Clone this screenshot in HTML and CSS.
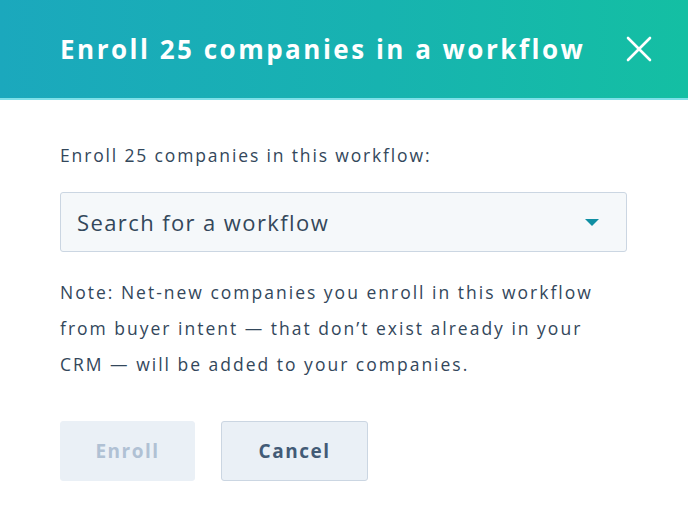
FILE: index.html
```html
<!DOCTYPE html>
<html lang="en">
<head>
    <meta charset="UTF-8">
    <title>Enroll in workflow</title>
    <link rel="stylesheet" href="styles.css">
</head>
<body>
<div class="dialog">
    <div class="dialog-head">
        <h1 class="dialog-title">Enroll 25 companies in a workflow</h1>
        <span class="dialog-close">
            <svg width="26" height="26" viewBox="0 0 26 26">
                <path d="M2 2 L24 24 M24 2 L2 24" stroke="#ffffff" stroke-width="2.6" fill="none" stroke-linecap="round"/>
            </svg>
        </span>
    </div>
    <div class="dialog-body">
        <p class="field-label">Enroll 25 companies in this workflow:</p>
        <div class="select">
            <span class="select-text">Search for a workflow</span>
            <span class="select-caret"></span>
        </div>
        <p class="note">Note: Net-new companies you enroll in this workflow<br>from buyer intent — that don’t exist already in your<br>CRM — will be added to your companies.</p>
        <div class="actions">
            <button class="btn btn-disabled">Enroll</button>
            <button class="btn btn-secondary">Cancel</button>
        </div>
    </div>
</div>
</body>
</html>
```

FILE: styles.css
```css
* {
    margin: 0;
    padding: 0;
    box-sizing: border-box;
}

body {
    background: #ffffff;
    font-family: "Open Sans", "Noto Sans", sans-serif;
    color: #33475b;
}

.dialog {
    width: 688px;
    height: 515px;
}

.dialog-head {
    height: 100px;
    background: linear-gradient(90deg, #1ba8bd 0%, #17b3b0 55%, #14bfa3 100%);
    border-bottom: 2px solid #7fe0e8;
    display: flex;
    align-items: center;
    justify-content: space-between;
    padding: 0 36px 0 60px;
}

.dialog-title {
    color: #ffffff;
    font-size: 26px;
    font-weight: 700;
    letter-spacing: 2.5px;
}

.dialog-close {
    display: flex;
}

.dialog-body {
    padding: 42px 60px 0 60px;
}

.field-label {
    font-size: 17.5px;
    line-height: 26px;
    margin-bottom: 24px;
    letter-spacing: 1.85px;
}

.select {
    width: 567px;
    height: 60px;
    background: #f5f8fa;
    border: 1px solid #cbd6e2;
    border-radius: 3px;
    display: flex;
    align-items: center;
    justify-content: space-between;
    padding: 0 27px 0 16px;
}

.select-text {
    font-size: 22px;
    color: #33475b;
    letter-spacing: 1.4px;
}

.select-caret {
    width: 0;
    height: 0;
    border-left: 7px solid transparent;
    border-right: 7px solid transparent;
    border-top: 7px solid #0f8fa3;
}

.note {
    font-size: 17.5px;
    line-height: 36px;
    margin-top: 22px;
    white-space: nowrap;
    letter-spacing: 2px;
}

.actions {
    display: flex;
    gap: 26px;
    margin-top: 39px;
}

.btn {
    height: 60px;
    border-radius: 3px;
    font-family: inherit;
    font-size: 19px;
    font-weight: 700;
    letter-spacing: 1.5px;
}

.btn-disabled {
    width: 135px;
    background: #eaf0f6;
    border: 1px solid #eaf0f6;
    color: #b0c1d4;
}

.btn-secondary {
    width: 147px;
    background: #eaf0f6;
    border: 1px solid #cbd6e2;
    color: #425b76;
}
```
